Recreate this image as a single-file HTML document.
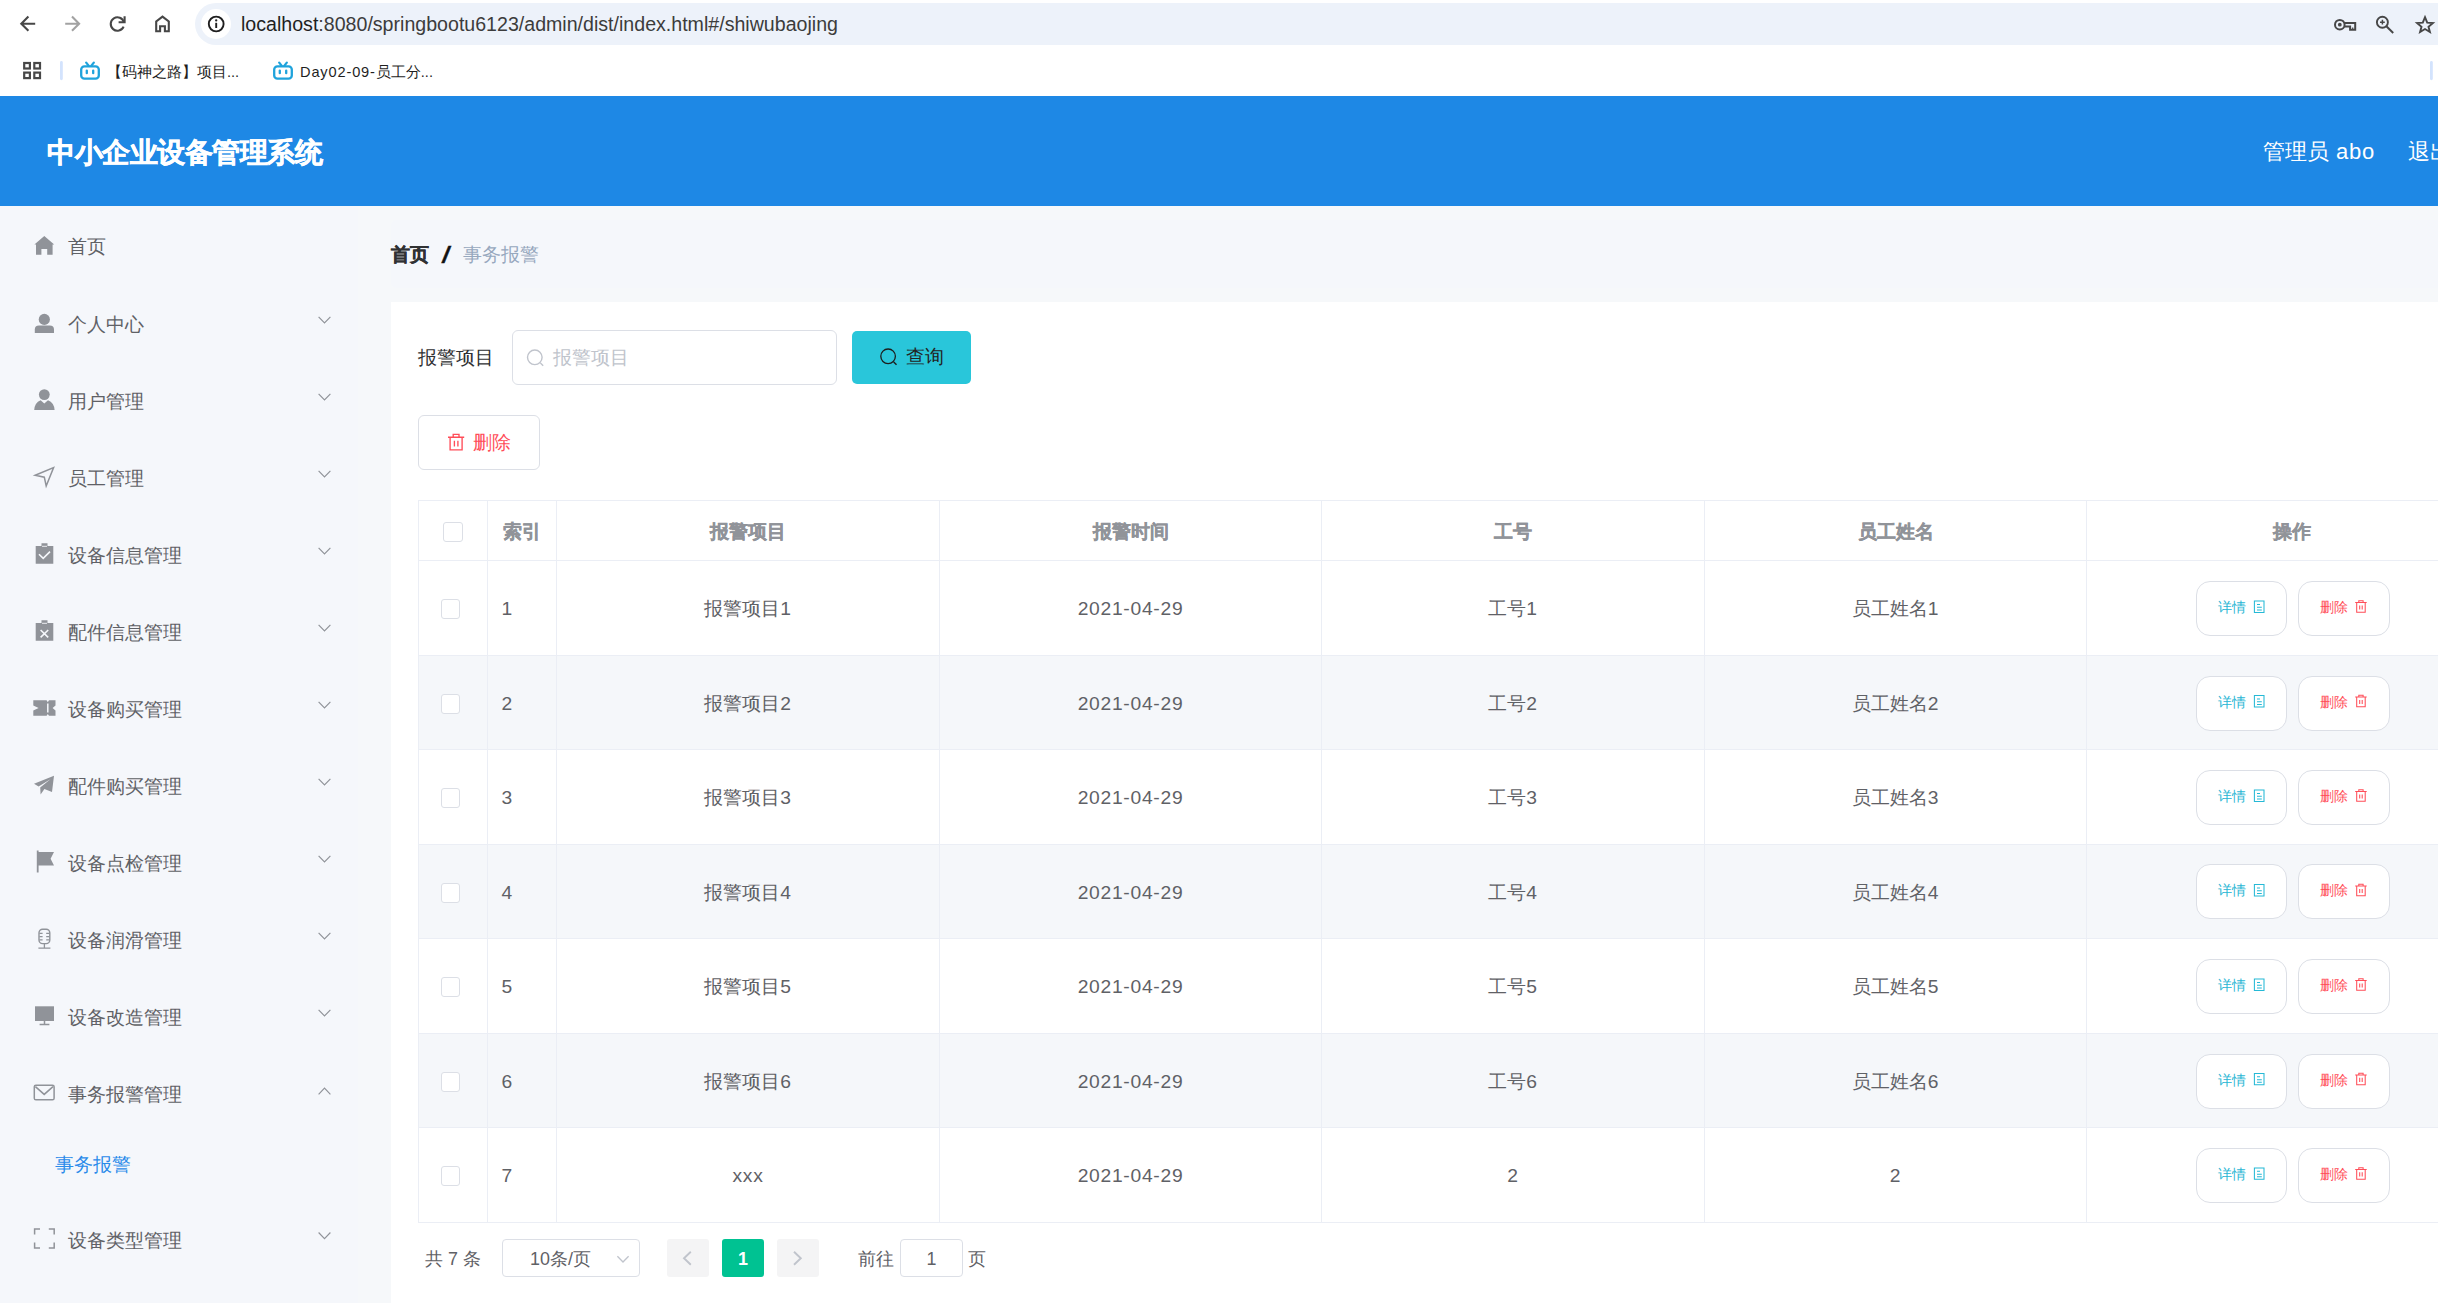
<!DOCTYPE html>
<html lang="zh">
<head>
<meta charset="utf-8">
<title>中小企业设备管理系统</title>
<style>
*{box-sizing:border-box;margin:0;padding:0}
html,body{width:2438px;height:1303px;overflow:hidden;background:#fff}
body{font-family:"Liberation Sans",sans-serif;position:relative;color:#303133}
.abs{position:absolute}
svg{display:block;position:absolute;overflow:visible}
/* ---------- browser chrome ---------- */
#chrome{position:absolute;left:0;top:0;width:2438px;height:96px;background:#fff}
#omni{position:absolute;left:195px;top:3px;width:2300px;height:42px;border-radius:21px;background:#edf2fa}
#info{position:absolute;left:201px;top:9px;width:30px;height:30px;border-radius:15px;background:#fff}
#url{position:absolute;left:241px;top:11px;height:26px;line-height:26px;font-size:19.6px;color:#3c3c3c;white-space:nowrap}
.bm{position:absolute;top:61px;height:22px;line-height:22px;font-size:14.6px;color:#1f1f1f;white-space:nowrap}
/* ---------- app header ---------- */
#hdr{position:absolute;left:0;top:96px;width:2438px;height:110px;background:#1e88e5}
#title{position:absolute;left:47px;top:35px;-webkit-text-stroke:0.5px #fff;height:44px;line-height:44px;font-size:27.5px;font-weight:bold;color:#fff;white-space:nowrap;letter-spacing:-0.5px}
#user{position:absolute;left:2263px;top:37px;height:38px;line-height:38px;font-size:22px;color:#fff;white-space:nowrap}
#logout{position:absolute;left:2408px;top:37px;height:38px;line-height:38px;font-size:22px;color:#fff;white-space:nowrap}
/* ---------- sidebar ---------- */
#side{position:absolute;left:0;top:206px;width:391px;height:1097px;background:#f5f7fb}
#side2{position:absolute;left:358px;top:206px;width:33px;height:1097px;background:#f6f8fa}
.mi{position:absolute;left:67.5px;height:30px;line-height:30px;font-size:19.25px;color:#5f6166;white-space:nowrap}
.mi.act{left:55px;color:#2a8bea}
/* ---------- main ---------- */
#main{position:absolute;left:391px;top:206px;width:2047px;height:1097px;background:#f6f8fa}
#bcbox{position:absolute;left:391px;top:220px;width:2060px;height:68px;border-radius:5px;background:#f5f7fb}
#panel{position:absolute;left:391px;top:302px;width:2047px;height:1001px;background:#fff}
.bc{position:absolute;top:240px;height:30px;line-height:30px;font-size:19.25px;white-space:nowrap}

/* ---------- form ---------- */
#lbl{position:absolute;left:418px;top:343px;height:30px;line-height:30px;font-size:19.25px;color:#303133;white-space:nowrap}
#inp{position:absolute;left:512px;top:330px;width:325px;height:55px;border:1.4px solid #dcdfe6;border-radius:6px;background:#fff}
#ph{position:absolute;left:553px;top:343px;height:30px;line-height:30px;font-size:19.25px;color:#c0c4cc;white-space:nowrap}
#qbtn{position:absolute;left:852px;top:331px;width:119px;height:53px;border-radius:5px;background:#29c6da}
#qtxt{position:absolute;left:906px;top:342px;height:30px;line-height:30px;font-size:19.25px;color:#222;white-space:nowrap}
#dbtn{position:absolute;left:418px;top:415px;width:122px;height:55px;border:1.4px solid #dcdfe6;border-radius:6px;background:#fff}
#dtxt{position:absolute;left:472.5px;top:428px;height:30px;line-height:30px;font-size:19.25px;color:#ff4d58;white-space:nowrap}
/* ---------- table ---------- */
.stripe{position:absolute;left:419px;width:2019px;background:#f5f7fa}
.hl{position:absolute;left:418px;width:2020px;height:1px;background:#ebeef5}
.vl{position:absolute;top:500px;width:1px;height:723px;background:#ebeef5}
.th{-webkit-text-stroke:0.3px #909399;position:absolute;height:30px;line-height:30px;font-size:19.25px;font-weight:bold;color:#909399;text-align:center;white-space:nowrap}
.td{position:absolute;height:30px;line-height:30px;font-size:19.25px;color:#5f6166;text-align:center;white-space:nowrap}
.n{letter-spacing:0.72px}
.cb{position:absolute;width:19px;height:20px;border:1.4px solid #dcdfe6;border-radius:3px;background:#fff}
.ob{position:absolute;height:55px;border:1.4px solid #dcdfe6;border-radius:14px;background:#fff;font-size:13.75px;line-height:52px;white-space:nowrap;padding-left:21px}
.c1{color:#29b6d4}.c2{color:#ff4d58}
/* ---------- pagination ---------- */
.pg{position:absolute;top:1244px;height:30px;line-height:30px;font-size:17.9px;color:#5f6166;white-space:nowrap}
.pbx{position:absolute;top:1239px;height:38px;border-radius:3px}
</style>
</head>
<body>
<!-- browser chrome -->
<div id="chrome">
  <div id="omni"></div>
  <div id="info"></div>
  <svg id="chromeicons" width="2438" height="96" viewBox="0 0 2438 96" style="left:0;top:0" fill="none" stroke-linecap="butt" stroke-linejoin="miter">
    <!-- back -->
    <path d="M35.2 23.7H22.5M28.4 16.6L21.3 23.7L28.4 30.8" stroke="#474747" stroke-width="2.1"/>
    <!-- forward -->
    <path d="M65.2 23.7H78M72 16.6L79.1 23.7L72 30.8" stroke="#a2a2a2" stroke-width="2.1"/>
    <!-- reload -->
    <path d="M123.9 22.2A6.7 6.7 0 1 0 123.6 26.6" stroke="#474747" stroke-width="2.1"/>
    <path d="M118.6 22.3H124.6V16.3" stroke="#474747" stroke-width="2.1"/>
    <!-- home -->
    <path d="M156.2 31.2V21.4L162.5 16.6L168.8 21.4V31.2H164.9V26.2H160.1V31.2Z" stroke="#474747" stroke-width="2.1"/>
    <!-- info -->
    <circle cx="216.2" cy="24" r="7.4" stroke="#1f1f1f" stroke-width="1.9"/>
    <circle cx="216.2" cy="20.4" r="1.15" fill="#1f1f1f"/>
    <path d="M216.2 22.8V28" stroke="#1f1f1f" stroke-width="1.9"/>
    <!-- apps -->
    <g stroke="#474747" stroke-width="2.2">
      <rect x="24.2" y="63" width="5.7" height="5.5"/><rect x="34.3" y="63" width="5.7" height="5.5"/>
      <rect x="24.2" y="72.6" width="5.7" height="5.5"/><rect x="34.3" y="72.6" width="5.7" height="5.5"/>
    </g>
    <rect x="60" y="61" width="2.8" height="19.2" rx="1.4" fill="#d3e3fd"/>
    <rect x="2430" y="61" width="2.8" height="19.2" rx="1.4" fill="#d3e3fd"/>
    <!-- bilibili 1 -->
    <g stroke="#1fa3dc" stroke-width="2.3" stroke-linecap="round">
      <rect x="81.2" y="66.3" width="17.6" height="12.4" rx="3.2"/>
      <path d="M86.2 62.6L88.6 65.6M93.8 62.6L91.4 65.6M86.8 70.6V73.2M93.2 70.6V73.2"/>
    </g>
    <!-- bilibili 2 -->
    <g stroke="#1fa3dc" stroke-width="2.3" stroke-linecap="round" transform="translate(193 0)">
      <rect x="81.2" y="66.3" width="17.6" height="12.4" rx="3.2"/>
      <path d="M86.2 62.6L88.6 65.6M93.8 62.6L91.4 65.6M86.8 70.6V73.2M93.2 70.6V73.2"/>
    </g>
    <!-- key -->
    <circle cx="2339.8" cy="24.7" r="4.8" stroke="#474747" stroke-width="2"/>
    <circle cx="2339.8" cy="24.7" r="1.9" fill="#474747"/>
    <path d="M2344.2 22.9H2355.2V29.7H2350.1V26.4H2344.4" stroke="#474747" stroke-width="2"/>
    <path d="M2352.7 27.4V29.7" stroke="#474747" stroke-width="1.2"/>
    <!-- zoom -->
    <circle cx="2382.4" cy="22.2" r="5.5" stroke="#474747" stroke-width="1.9"/>
    <path d="M2382.4 19.8V24.6M2380 22.2H2384.8" stroke="#474747" stroke-width="1.5"/>
    <path d="M2386.4 26.2L2393.2 33" stroke="#474747" stroke-width="2"/>
    <!-- star -->
    <path d="M2425 17.2L2427.2 22.7L2432.9 23.1L2428.5 26.8L2429.9 32L2425 29L2420.1 32L2421.5 26.8L2417.1 23.1L2422.8 22.7Z" stroke="#474747" stroke-width="1.9"/>
  </svg>
  <div id="url"><span style="color:#1f1f1f">localhost</span>:8080/springbootu6123/admin/dist/index.html#/shiwubaojing</div>
  <div class="bm" style="left:107px">【码神之路】项目...</div>
  <div class="bm" style="left:300px"><span style="letter-spacing:0.85px">Day02-09-</span>员工分...</div>
</div>
<!-- app header -->
<div id="hdr">
  <div id="title">中小企业设备管理系统</div>
  <div id="user">管理员<span style="letter-spacing:0.8px"> abo</span></div>
  <div id="logout">退出</div>
</div>
<!-- sidebar -->
<div id="side"></div>
<div id="side2"></div>
<div id="menu">
  <div class="mi" style="top:232px">首页</div>
  <div class="mi" style="top:310px">个人中心</div>
  <div class="mi" style="top:387px">用户管理</div>
  <div class="mi" style="top:464px">员工管理</div>
  <div class="mi" style="top:541px">设备信息管理</div>
  <div class="mi" style="top:618px">配件信息管理</div>
  <div class="mi" style="top:695px">设备购买管理</div>
  <div class="mi" style="top:772px">配件购买管理</div>
  <div class="mi" style="top:849px">设备点检管理</div>
  <div class="mi" style="top:926px">设备润滑管理</div>
  <div class="mi" style="top:1003px">设备改造管理</div>
  <div class="mi" style="top:1080px">事务报警管理</div>
  <div class="mi act" style="top:1150px">事务报警</div>
  <div class="mi" style="top:1226px">设备类型管理</div>
</div>
<!-- sidebar icons -->
<svg id="sideicons" width="391" height="1303" viewBox="0 0 391 1303" style="left:0;top:0" fill="none">
  <path d="M318.6 316.8L324.5 323.0L330.4 316.8M318.6 393.8L324.5 400.0L330.4 393.8M318.6 470.8L324.5 477.0L330.4 470.8M318.6 547.8L324.5 554.0L330.4 547.8M318.6 624.8L324.5 631.0L330.4 624.8M318.6 701.8L324.5 708.0L330.4 701.8M318.6 778.8L324.5 785.0L330.4 778.8M318.6 855.8L324.5 862.0L330.4 855.8M318.6 932.8L324.5 939.0L330.4 932.8M318.6 1009.8L324.5 1016.0L330.4 1009.8M318.6 1232.5L324.5 1238.7L330.4 1232.5M318.6 1094.3L324.5 1088.1L330.4 1094.3" stroke="#909399" stroke-width="1.15"/>
  <!-- home -->
  <path d="M44.3 236L54.2 244.6H52.6V254.8H47.2V249H41.4V254.8H36V244.6H34.4Z" fill="#909399"/>
  <!-- user-solid -->
  <circle cx="44.3" cy="319.4" r="5.6" fill="#909399"/>
  <path d="M34.8 333.1V329.6Q34.8 325.4 39 325.4H49.8Q54 325.4 54 329.6V333.1Z" fill="#909399"/>
  <!-- s-custom -->
  <circle cx="44.3" cy="394.6" r="5.4" fill="#909399"/>
  <path d="M34.2 410.1Q34.6 402.6 40.6 400.2L44.3 403.6L48 400.2Q54.2 402.6 54.6 410.1Z" fill="#909399"/>
  <!-- position -->
  <path d="M35.2 475.2L53.6 467.6L46.2 486L44.3 477.2Z" stroke="#909399" stroke-width="1.5" stroke-linejoin="miter"/>
  <!-- s-claim -->
  <path d="M35.7 546.1H41.5V543.3H47.5V546.1H53.3V563.8H35.7Z" fill="#909399"/>
  <path d="M39 554.2L43.2 558.4L50 551.6" stroke="#f5f7fb" stroke-width="1.6"/>
  <path d="M42 546.3H47" stroke="#f5f7fb" stroke-width="0.9"/>
  <!-- s-release -->
  <path d="M35.7 623.1H41.5V620.3H47.5V623.1H53.3V640.8H35.7Z" fill="#909399"/>
  <path d="M40.6 630L48.2 637.4M48.2 630L40.6 637.4" stroke="#f5f7fb" stroke-width="1.6"/>
  <path d="M42 623.3H47" stroke="#f5f7fb" stroke-width="0.9"/>
  <!-- s-ticket -->
  <path d="M33.3 700.3H46.6L47.8 702.2L49 700.3H55.5V705.6L52.6 708L55.5 710.4V715.8H49L47.8 713.9L46.6 715.8H33.3V710.4L38.6 708L33.3 705.6Z" fill="#909399"/>
  <path d="M47.8 703.6V712.4" stroke="#f5f7fb" stroke-width="1.5"/>
  <!-- s-promotion -->
  <path d="M34 783.8L54 775.8L52 792L44.4 789L40.6 794.4L40.2 787.6L50.4 779.2L38.6 786.4Z" fill="#909399"/>
  <!-- s-flag -->
  <path d="M36.8 850.4H38.6V852H54L50.6 858.7L54 865.5H38.6V872.6H36.8Z" fill="#909399"/>
  <!-- microphone -->
  <rect x="39" y="929.2" width="10.8" height="14.4" rx="3.6" stroke="#909399" stroke-width="1.4"/>
  <path d="M44.4 943.6V948.2M38.4 948.2H50.4M39.4 933.4H42.6M39.4 936.6H42.6M39.4 939.8H42.6M46.2 933.4H49.4M46.2 936.6H49.4M46.2 939.8H49.4" stroke="#909399" stroke-width="1.3"/>
  <!-- s-platform -->
  <path d="M35 1006.3H54V1021H35Z" fill="#909399"/>
  <path d="M44.5 1021V1024.4M39.6 1024.5H49.4" stroke="#909399" stroke-width="1.5"/>
  <!-- message -->
  <rect x="34.3" y="1085.2" width="19.8" height="14.6" rx="1.6" stroke="#909399" stroke-width="1.5"/>
  <path d="M35.4 1086.6L44.2 1094.4L53 1086.6" stroke="#909399" stroke-width="1.5"/>
  <!-- full-screen -->
  <path d="M34.6 1234.6V1229H40M48.8 1229H54.2V1234.6M54.2 1242.4V1248H48.8M40 1248H34.6V1242.4" stroke="#909399" stroke-width="1.5"/>
</svg>
<!-- main -->
<div id="main"></div>
<div id="bcbox"></div>
<div class="bc" style="left:391px;font-weight:bold;color:#303133;-webkit-text-stroke:0.3px #303133">首页</div>
<div class="bc" style="left:443px;font-weight:normal;color:#111;font-size:24px;-webkit-text-stroke:0.35px #111;transform:scaleX(1.45);transform-origin:50% 50%">/</div>
<div class="bc" style="left:463px;color:#97a8be">事务报警</div>
<div id="panel"></div>
<!-- form -->
<div id="lbl">报警项目</div>
<div id="inp"></div>
<div id="ph">报警项目</div>
<div id="qbtn"></div>
<div id="qtxt">查询</div>
<div id="dbtn"></div>
<div id="dtxt">删除</div>
<!-- table -->
<div id="tbl">
<div class="stripe" style="top:656px;height:93px"></div>
<div class="stripe" style="top:845px;height:93px"></div>
<div class="stripe" style="top:1034px;height:93px"></div>
<div class="hl" style="top:500px"></div>
<div class="hl" style="top:560px"></div>
<div class="hl" style="top:655px"></div>
<div class="hl" style="top:749px"></div>
<div class="hl" style="top:844px"></div>
<div class="hl" style="top:938px"></div>
<div class="hl" style="top:1033px"></div>
<div class="hl" style="top:1127px"></div>
<div class="hl" style="top:1222px"></div>
<div class="vl" style="left:418px"></div>
<div class="vl" style="left:487px"></div>
<div class="vl" style="left:556px"></div>
<div class="vl" style="left:939px"></div>
<div class="vl" style="left:1321px"></div>
<div class="vl" style="left:1704px"></div>
<div class="vl" style="left:2086px"></div>
<div class="cb" style="left:443px;top:522px;width:20px;height:19.5px"></div>
<div class="th" style="left:487px;width:69px;top:517px">索引</div>
<div class="th" style="left:598px;width:300px;top:517px">报警项目</div>
<div class="th" style="left:980.5px;width:300px;top:517px">报警时间</div>
<div class="th" style="left:1363px;width:300px;top:517px">工号</div>
<div class="th" style="left:1745.5px;width:300px;top:517px">员工姓名</div>
<div class="th" style="left:2142px;width:300px;top:517px">操作</div>
<div class="row">
<div class="cb" style="left:441px;top:599px"></div>
<div class="td" style="left:501.5px;width:50px;text-align:left;top:594px"><span class="n">1</span></div>
<div class="td" style="left:598px;width:300px;top:594px">报警项目<span class="n">1</span></div>
<div class="td" style="left:980.5px;width:300px;top:594px"><span class="n">2021-04-29</span></div>
<div class="td" style="left:1363px;width:300px;top:594px">工号<span class="n">1</span></div>
<div class="td" style="left:1745.5px;width:300px;top:594px">员工姓名<span class="n">1</span></div>
<div class="ob" style="left:2196px;top:581px;width:91px"><span class="c1">详情</span></div>
<div class="ob" style="left:2298px;top:581px;width:92px"><span class="c2">删除</span></div>
</div>
<div class="row">
<div class="cb" style="left:441px;top:694px"></div>
<div class="td" style="left:501.5px;width:50px;text-align:left;top:689px"><span class="n">2</span></div>
<div class="td" style="left:598px;width:300px;top:689px">报警项目<span class="n">2</span></div>
<div class="td" style="left:980.5px;width:300px;top:689px"><span class="n">2021-04-29</span></div>
<div class="td" style="left:1363px;width:300px;top:689px">工号<span class="n">2</span></div>
<div class="td" style="left:1745.5px;width:300px;top:689px">员工姓名<span class="n">2</span></div>
<div class="ob" style="left:2196px;top:676px;width:91px"><span class="c1">详情</span></div>
<div class="ob" style="left:2298px;top:676px;width:92px"><span class="c2">删除</span></div>
</div>
<div class="row">
<div class="cb" style="left:441px;top:788px"></div>
<div class="td" style="left:501.5px;width:50px;text-align:left;top:783px"><span class="n">3</span></div>
<div class="td" style="left:598px;width:300px;top:783px">报警项目<span class="n">3</span></div>
<div class="td" style="left:980.5px;width:300px;top:783px"><span class="n">2021-04-29</span></div>
<div class="td" style="left:1363px;width:300px;top:783px">工号<span class="n">3</span></div>
<div class="td" style="left:1745.5px;width:300px;top:783px">员工姓名<span class="n">3</span></div>
<div class="ob" style="left:2196px;top:770px;width:91px"><span class="c1">详情</span></div>
<div class="ob" style="left:2298px;top:770px;width:92px"><span class="c2">删除</span></div>
</div>
<div class="row">
<div class="cb" style="left:441px;top:883px"></div>
<div class="td" style="left:501.5px;width:50px;text-align:left;top:878px"><span class="n">4</span></div>
<div class="td" style="left:598px;width:300px;top:878px">报警项目<span class="n">4</span></div>
<div class="td" style="left:980.5px;width:300px;top:878px"><span class="n">2021-04-29</span></div>
<div class="td" style="left:1363px;width:300px;top:878px">工号<span class="n">4</span></div>
<div class="td" style="left:1745.5px;width:300px;top:878px">员工姓名<span class="n">4</span></div>
<div class="ob" style="left:2196px;top:864px;width:91px"><span class="c1">详情</span></div>
<div class="ob" style="left:2298px;top:864px;width:92px"><span class="c2">删除</span></div>
</div>
<div class="row">
<div class="cb" style="left:441px;top:977px"></div>
<div class="td" style="left:501.5px;width:50px;text-align:left;top:972px"><span class="n">5</span></div>
<div class="td" style="left:598px;width:300px;top:972px">报警项目<span class="n">5</span></div>
<div class="td" style="left:980.5px;width:300px;top:972px"><span class="n">2021-04-29</span></div>
<div class="td" style="left:1363px;width:300px;top:972px">工号<span class="n">5</span></div>
<div class="td" style="left:1745.5px;width:300px;top:972px">员工姓名<span class="n">5</span></div>
<div class="ob" style="left:2196px;top:959px;width:91px"><span class="c1">详情</span></div>
<div class="ob" style="left:2298px;top:959px;width:92px"><span class="c2">删除</span></div>
</div>
<div class="row">
<div class="cb" style="left:441px;top:1072px"></div>
<div class="td" style="left:501.5px;width:50px;text-align:left;top:1067px"><span class="n">6</span></div>
<div class="td" style="left:598px;width:300px;top:1067px">报警项目<span class="n">6</span></div>
<div class="td" style="left:980.5px;width:300px;top:1067px"><span class="n">2021-04-29</span></div>
<div class="td" style="left:1363px;width:300px;top:1067px">工号<span class="n">6</span></div>
<div class="td" style="left:1745.5px;width:300px;top:1067px">员工姓名<span class="n">6</span></div>
<div class="ob" style="left:2196px;top:1054px;width:91px"><span class="c1">详情</span></div>
<div class="ob" style="left:2298px;top:1054px;width:92px"><span class="c2">删除</span></div>
</div>
<div class="row">
<div class="cb" style="left:441px;top:1166px"></div>
<div class="td" style="left:501.5px;width:50px;text-align:left;top:1161px"><span class="n">7</span></div>
<div class="td" style="left:598px;width:300px;top:1161px"><span class="n">xxx</span></div>
<div class="td" style="left:980.5px;width:300px;top:1161px"><span class="n">2021-04-29</span></div>
<div class="td" style="left:1363px;width:300px;top:1161px"><span class="n">2</span></div>
<div class="td" style="left:1745.5px;width:300px;top:1161px"><span class="n">2</span></div>
<div class="ob" style="left:2196px;top:1148px;width:91px"><span class="c1">详情</span></div>
<div class="ob" style="left:2298px;top:1148px;width:92px"><span class="c2">删除</span></div>
</div>
</div>
<!-- pagination -->
<div class="pg" style="left:425px">共 7 条</div>
<div class="pbx" style="left:502px;width:138px;border:1.4px solid #dcdfe6;background:#fff;border-radius:4px"></div>
<div class="pg" style="left:530px">10条/页</div>
<div class="pbx" style="left:667px;width:42px;background:#f4f4f5"></div>
<div class="pbx" style="left:722px;width:42px;background:#00c292"></div>
<div class="pg" style="left:722px;width:42px;text-align:center;color:#fff;font-weight:bold">1</div>
<div class="pbx" style="left:777px;width:42px;background:#f4f4f5"></div>
<div class="pg" style="left:858px">前往</div>
<div class="pbx" style="left:900px;width:63px;border:1.4px solid #dcdfe6;background:#fff;border-radius:4px"></div>
<div class="pg" style="left:900px;width:63px;text-align:center">1</div>
<div class="pg" style="left:968px">页</div>
<!-- main icons -->
<svg id="mainicons" width="2438" height="1303" viewBox="0 0 2438 1303" style="left:0;top:0" fill="none">
  <!-- search in input -->
  <circle cx="534.8" cy="357.3" r="7.3" stroke="#c0c4cc" stroke-width="1.4"/>
  <path d="M540.4 362.9L543.2 365.7" stroke="#c0c4cc" stroke-width="1.4"/>
  <!-- search in button -->
  <circle cx="888.1" cy="356.3" r="7.3" stroke="#1d1d1d" stroke-width="1.3"/>
  <path d="M893.7 361.9L896.5 364.7" stroke="#1d1d1d" stroke-width="1.4"/>
  <!-- trash big -->
  <path d="M448 437.2H464.2M453.2 437V434.4H459V437M450.1 437.2V449.8H462.1V437.2M454.4 440.8V446.4M457.9 440.8V446.4" stroke="#ff4d58" stroke-width="1.35"/>
  <!-- row icons -->
  <path d="M2254.4 600.9H2264V612.4H2254.4ZM2257 604.4H2260M2257 607.2H2261.8M2257 609.9H2261.8M2254.4 695.4H2264V706.9H2254.4ZM2257 698.9H2260M2257 701.8H2261.8M2257 704.4H2261.8M2254.4 789.9H2264V801.4H2254.4ZM2257 793.4H2260M2257 796.2H2261.8M2257 798.9H2261.8M2254.4 884.4H2264V895.9H2254.4ZM2257 887.9H2260M2257 890.8H2261.8M2257 893.4H2261.8M2254.4 978.9H2264V990.4H2254.4ZM2257 982.4H2260M2257 985.2H2261.8M2257 987.9H2261.8M2254.4 1073.4H2264V1084.8H2254.4ZM2257 1076.8H2260M2257 1079.7H2261.8M2257 1082.3H2261.8M2254.4 1167.9H2264V1179.3H2254.4ZM2257 1171.3H2260M2257 1174.2H2261.8M2257 1176.8H2261.8" stroke="#25b9d6" stroke-width="1.05"/>
  <path d="M2355.2 602.5H2366.7M2358.8 602.4V600.8H2363.1V602.4M2356.7 602.5V612.2H2365.2V602.5M2359.7 605.4V609.4M2362.2 605.4V609.4M2355.2 697.0H2366.7M2358.8 696.9V695.2H2363.1V696.9M2356.7 697.0V706.8H2365.2V697.0M2359.7 699.9V703.9M2362.2 699.9V703.9M2355.2 791.5H2366.7M2358.8 791.4V789.8H2363.1V791.4M2356.7 791.5V801.2H2365.2V791.5M2359.7 794.4V798.4M2362.2 794.4V798.4M2355.2 886.0H2366.7M2358.8 885.9V884.2H2363.1V885.9M2356.7 886.0V895.8H2365.2V886.0M2359.7 888.9V892.9M2362.2 888.9V892.9M2355.2 980.5H2366.7M2358.8 980.4V978.8H2363.1V980.4M2356.7 980.5V990.2H2365.2V980.5M2359.7 983.4V987.4M2362.2 983.4V987.4M2355.2 1075.0H2366.7M2358.8 1074.8V1073.2H2363.1V1074.8M2356.7 1075.0V1084.7H2365.2V1075.0M2359.7 1077.8V1081.9M2362.2 1077.8V1081.9M2355.2 1169.5H2366.7M2358.8 1169.3V1167.7H2363.1V1169.3M2356.7 1169.5V1179.2H2365.2V1169.5M2359.7 1172.3V1176.4M2362.2 1172.3V1176.4" stroke="#ff4d58" stroke-width="1.05"/>
  <!-- pagination -->
  <path d="M617.4 1256.2L623 1262L628.6 1256.2" stroke="#c0c4cc" stroke-width="1.3"/>
  <path d="M690.8 1251.8L684 1258.3L690.8 1264.8" stroke="#c0c4cc" stroke-width="1.9"/>
  <path d="M794 1251.8L800.8 1258.3L794 1264.8" stroke="#c0c4cc" stroke-width="1.9"/>
</svg>
</body>
</html>
